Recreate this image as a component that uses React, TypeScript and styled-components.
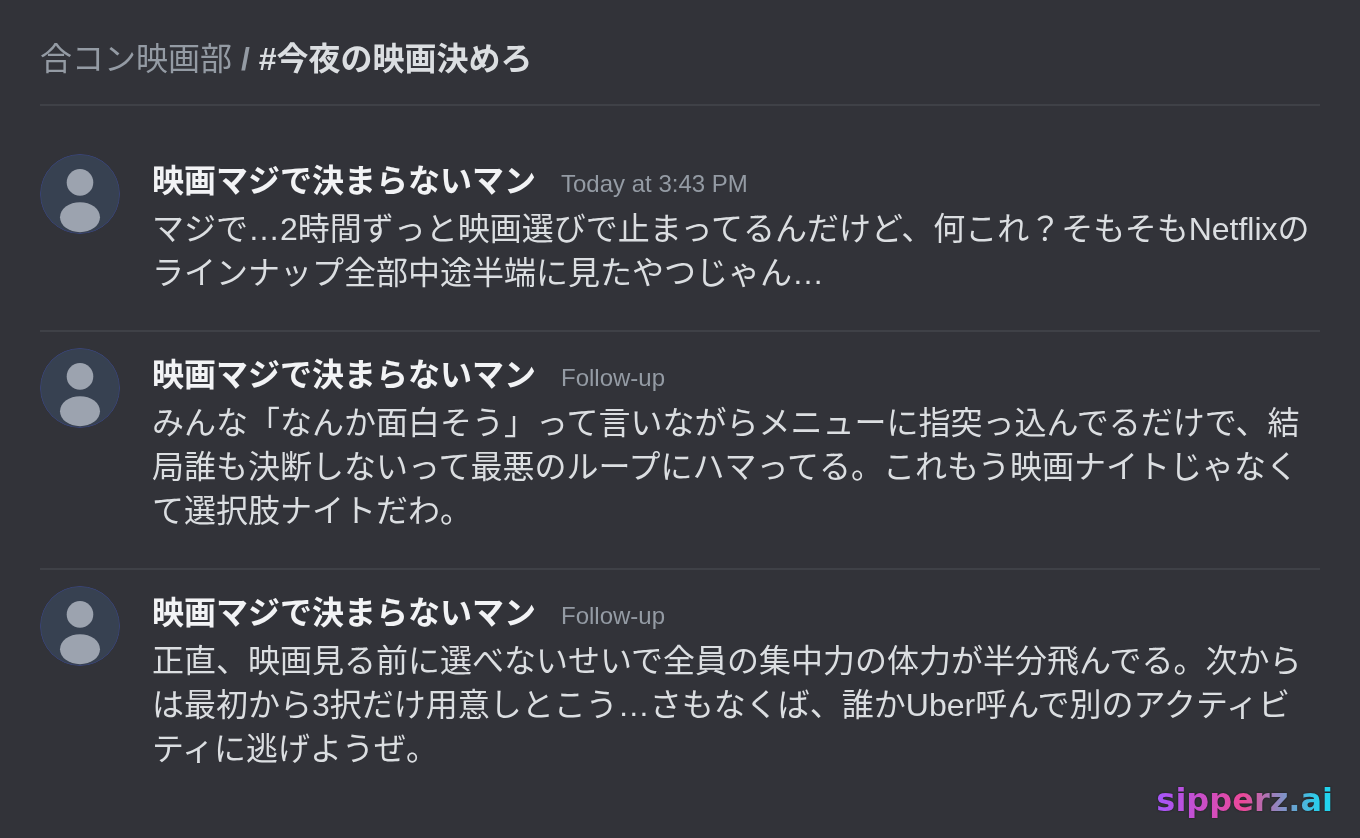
import React from 'react';
import styled, {createGlobalStyle} from 'styled-components';

const GlobalStyle = createGlobalStyle`
    * {
        box-sizing: border-box;
    }

    body {
        margin: 0;
        background: #323339;
        font-family: "Liberation Sans", "Noto Sans CJK JP", sans-serif;
    }
`;

const Page = styled.main`
    position: relative;
    width: 1360px;
    height: 838px;
    padding: 32px 40px;
    overflow: hidden;
    background: #323339;
    color: #dbdee1;
    will-change: transform;
`;

const ChannelHeader = styled.header`
    height: 74px;
    margin-bottom: 32px;
    padding-top: 5px;
    border-bottom: 2px solid #3f4147;
    color: #949ba4;
    font-size: 32px;
    line-height: 44px;
    white-space: nowrap;
`;

const Separator = styled.span`
    font-weight: 700;
`;

const ChannelName = styled.span`
    color: #dbdee1;
    font-weight: 700;
`;

const MessageRow = styled.article`
    display: flex;
    gap: 32px;
    padding: 16px 0 35px;

    & + & {
        border-top: 2px solid #3f4147;
    }
`;

const Avatar = styled.svg`
    flex: none;
    width: 80px;
    height: 80px;
    border-radius: 50%;
`;

const MessageBody = styled.div`
    flex: 1;
    min-width: 0;
    padding-top: 3px;
`;

const MessageMeta = styled.div`
    display: flex;
    align-items: baseline;
    gap: 25px;
    height: 50px;
    line-height: 48px;
`;

const Author = styled.span`
    color: #f2f3f5;
    font-size: 32px;
    font-weight: 700;
`;

const Timestamp = styled.span`
    color: #949ba4;
    font-size: 24px;
`;

const MessageText = styled.p`
    margin: 0;
    color: #dbdee1;
    font-size: 32px;
    line-height: 44px;
    white-space: nowrap;
`;

const Watermark = styled.div`
    position: absolute;
    right: 27px;
    bottom: 19px;
    background: linear-gradient(90deg, #a855f7 3%, #ec4899 49%, #22d3ee 93%);
    background-clip: text;
    color: transparent;
    filter: drop-shadow(0 0 1px rgba(0, 0, 0, 0.5));
    font-family: "DejaVu Sans", sans-serif;
    font-size: 32px;
    font-weight: 700;
    line-height: 37px;
`;

interface Message {
    time: string;
    lines: string[];
}

const author = '映画マジで決まらないマン';

const messages: Message[] = [
    {
        time: 'Today at 3:43 PM',
        lines: [
            'マジで…2時間ずっと映画選びで止まってるんだけど、何これ？そもそもNetflixの',
            'ラインナップ全部中途半端に見たやつじゃん…'
        ]
    },
    {
        time: 'Follow-up',
        lines: [
            'みんな「なんか面白そう」って言いながらメニューに指突っ込んでるだけで、結',
            '局誰も決断しないって最悪のループにハマってる。これもう映画ナイトじゃなく',
            'て選択肢ナイトだわ。'
        ]
    },
    {
        time: 'Follow-up',
        lines: [
            '正直、映画見る前に選べないせいで全員の集中力の体力が半分飛んでる。次から',
            'は最初から3択だけ用意しとこう…さもなくば、誰かUber呼んで別のアクティビ',
            'ティに逃げようぜ。'
        ]
    }
];

const UserAvatar: React.FC = () => (
    <Avatar viewBox="0 0 80 80" aria-hidden="true">
        <circle cx="40" cy="40" r="40" fill="#374151"/>
        <circle cx="40" cy="40" r="39.6" fill="none" stroke="#3b4583" strokeWidth="0.8"/>
        <circle cx="40" cy="28.4" r="13.3" fill="#9ca3af"/>
        <ellipse cx="40" cy="63.2" rx="20" ry="15" fill="#9ca3af"/>
    </Avatar>
);

const App: React.FC = () => {
    return (
        <>
            <GlobalStyle/>
            <Page lang="ja">
                <ChannelHeader>
                    合コン映画部 <Separator>/</Separator> <ChannelName>#今夜の映画決めろ</ChannelName>
                </ChannelHeader>

                {messages.map((message, index) => (
                    <MessageRow key={index}>
                        <UserAvatar/>
                        <MessageBody>
                            <MessageMeta>
                                <Author>{author}</Author>
                                <Timestamp>{message.time}</Timestamp>
                            </MessageMeta>
                            <MessageText>
                                {message.lines.map((line, lineIndex) => (
                                    <React.Fragment key={lineIndex}>
                                        {lineIndex > 0 && <br/>}
                                        {line}
                                    </React.Fragment>
                                ))}
                            </MessageText>
                        </MessageBody>
                    </MessageRow>
                ))}

                <Watermark>sipperz.ai</Watermark>
            </Page>
        </>
    );
};

export default App;
